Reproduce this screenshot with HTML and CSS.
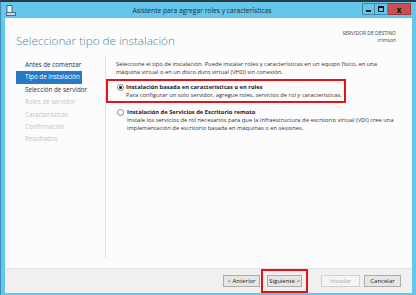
FILE: index.html
```html
<!DOCTYPE html>
<html lang="es">
<head>
    <meta charset="UTF-8">
    <title>Asistente para agregar roles y características</title>
    <link rel="stylesheet" href="styles.css">
</head>
<body>
    <div class="window">
        <div class="titlebar">
            <svg class="app-icon" width="10" height="11" viewBox="0 0 10 11">
                <rect x="1" y="0.5" width="5" height="7" fill="#e8f4fb" stroke="#44708a" stroke-width="1"/>
                <rect x="0.5" y="7.5" width="9" height="3" fill="#d0d8de" stroke="#44708a" stroke-width="1"/>
            </svg>
            <div class="title">Asistente para agregar roles y características</div>
            <div class="controls">
                <span class="ctl min"><i></i></span>
                <span class="ctl max"><i></i></span>
                <span class="ctl close">x</span>
            </div>
        </div>

        <div class="client">
            <div class="header">
                <h1>Seleccionar tipo de instalación</h1>
                <div class="dest">
                    <div>SERVIDOR DE DESTINO</div>
                    <div>crimson</div>
                </div>
            </div>

            <div class="main">
                <div class="side">
                    <ul class="steps">
                        <li>Antes de comenzar</li>
                        <li class="current">Tipo de instalación</li>
                        <li>Selección de servidor</li>
                        <li class="off">Roles de servidor</li>
                        <li class="off">Características</li>
                        <li class="off">Confirmación</li>
                        <li class="off">Resultados</li>
                    </ul>
                </div>

                <div class="content">
                    <p class="intro">Seleccione el tipo de instalación. Puede instalar roles y características en un equipo físico, en una máquina virtual o en un disco duro virtual (VHD) sin conexión.</p>

                    <div class="option marked">
                        <span class="radio checked"></span>
                        <div>
                            <div class="opt-title">Instalación basada en características o en roles</div>
                            <div class="opt-desc">Para configurar un solo servidor, agregue roles, servicios de rol y características.</div>
                        </div>
                    </div>

                    <div class="option">
                        <span class="radio"></span>
                        <div>
                            <div class="opt-title">Instalación de Servicios de Escritorio remoto</div>
                            <div class="opt-desc">Instale los servicios de rol necesarios para que la Infraestructura de escritorio virtual (VDI) cree una implementación de escritorio basada en máquinas o en sesiones.</div>
                        </div>
                    </div>
                </div>
            </div>

            <div class="footer">
                <button>&lt; Anterior</button>
                <span class="marked-btn"><button>Siguiente &gt;</button></span>
                <button class="disabled">Instalar</button>
                <button>Cancelar</button>
            </div>
        </div>
    </div>
</body>
</html>
```

FILE: styles.css
```css
body {
    margin: 0;
    background: #2b3a44;
    font-family: "Open Sans", "Noto Sans", sans-serif;
}

.window {
    height: 293px;
    margin-top: 2px;
    background: #63c6ea;
    border-left: 1px solid #3b8fb0;
    display: flex;
    flex-direction: column;
}

.titlebar {
    height: 16px;
    display: flex;
    align-items: center;
}

.app-icon { margin-left: 5px; }

.title {
    flex: 1;
    text-align: center;
    font-size: 6.7px;
    color: #1c2c36;
    padding-left: 26px;
}

.controls {
    display: flex;
    align-self: flex-start;
    margin-right: 5px;
    margin-top: 1px;
}

.ctl {
    width: 13px;
    height: 12px;
    border: 1px solid #3f8aa8;
    border-left: none;
    display: flex;
    align-items: center;
    justify-content: center;
    box-sizing: border-box;
}

.min { border-left: 1px solid #3f8aa8; }
.min i { width: 5px; height: 2px; background: #111; margin-top: 3px; }
.max i { width: 4px; height: 3px; border: 1px solid #111; border-top-width: 2px; }

.close {
    width: 23px;
    background: #c75050;
    color: #111;
    font-size: 8px;
    font-weight: bold;
    border-color: #a03a3a;
}

.client {
    flex: 1;
    margin: 0 4px 2px 4px;
    background: #fcfcfc;
    display: flex;
    flex-direction: column;
}

.header {
    height: 37px;
    display: flex;
    justify-content: space-between;
    padding: 0 16px 0 11px;
}

h1 {
    margin: 14px 0 0;
    font-size: 11.7px;
    font-weight: 300;
    color: #4f87a3;
}

.dest {
    margin-top: 12px;
    font-size: 5px;
    color: #444;
    text-align: right;
    line-height: 7px;
}

.main {
    flex: 1;
    display: flex;
}

.side {
    width: 100px;
    margin-bottom: 10px;
    border-right: 1px solid #e2e2e2;
}

.steps {
    list-style: none;
    margin: 0 0 0 11px;
    padding: 4px 0 0;
    width: 66px;
}

.steps li {
    font-size: 6.3px;
    color: #333;
    height: 12.4px;
    line-height: 12.4px;
    padding-left: 9px;
    white-space: nowrap;
}

.steps .current {
    background: #2879c4;
    color: #fff;
}

.steps .off { color: #c4c4c4; }

.content {
    flex: 1;
    padding: 5px 8px 0 10px;
    font-size: 5.8px;
    color: #333;
}

.intro {
    margin: 0 14px 3px 0;
    line-height: 8px;
}

.option {
    display: flex;
    gap: 3px;
    padding: 3px 0 3px 1px;
    line-height: 8px;
}

.option.marked {
    margin-left: -10px;
    padding: 2px 0 2px 9px;
    width: 227px;
    border: 2px solid #e2131a;
    margin-bottom: 2px;
    gap: 2px;
}

.option.marked .opt-desc { white-space: nowrap; }

.radio {
    width: 5px;
    height: 5px;
    border: 1px solid #888;
    border-radius: 50%;
    margin-top: 1px;
    background: #fff;
    flex: none;
    position: relative;
}

.radio.checked::after {
    content: "";
    position: absolute;
    left: 1px;
    top: 1px;
    width: 3px;
    height: 3px;
    border-radius: 50%;
    background: #111;
}

.opt-title { font-weight: bold; color: #222; }

.footer {
    height: 24px;
    background: #f0f0f0;
    border-top: 1px solid #e4e4e4;
    display: flex;
    align-items: center;
    justify-content: flex-end;
    padding-right: 11px;
}

button {
    font-family: inherit;
    font-size: 6px;
    color: #222;
    height: 12px;
    width: 37px;
    padding: 0;
    border: 1px solid #adadad;
    background: #e6e6e6;
}

button.disabled {
    color: #aaa;
    border-color: #d0d0d0;
    background: #f4f4f4;
    width: 39px;
    margin: 0 4px 0 13px;
}

.marked-btn {
    border: 2px solid #e2131a;
    padding: 4px 4px;
    margin-left: 1px;
    display: flex;
}

.marked-btn button { width: 35px; }
```
